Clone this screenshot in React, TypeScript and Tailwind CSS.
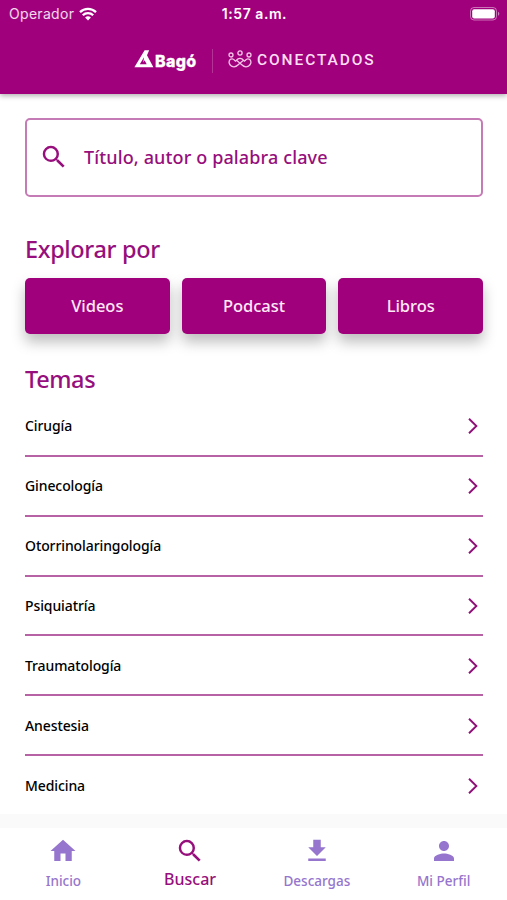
import React from 'react';

const ICON_PATHS = {
  home: 'M10 20v-6h4v6h5v-8h3L12 3 2 12h3v8z',
  search:
    'M15.5 14h-.79l-.28-.27A6.471 6.471 0 0 0 16 9.5 6.5 6.5 0 1 0 9.5 16c1.61 0 3.09-.59 4.23-1.57l.27.28v.79l5 4.99L20.49 19l-4.99-5zm-6 0C7.01 14 5 11.99 5 9.5S7.01 5 9.5 5 14 7.01 14 9.5 11.99 14 9.5 14z',
  download: 'M19 9h-4V3H9v6H5l7 7 7-7zM5 18v2h14v-2H5z',
  person:
    'M12 12c2.21 0 4-1.79 4-4s-1.79-4-4-4-4 1.79-4 4 1.79 4 4 4zm0 2c-2.67 0-8 1.34-8 4v2h16v-2c0-2.66-5.33-4-8-4z',
};

type IconName = keyof typeof ICON_PATHS;

const FILTERS = ['Videos', 'Podcast', 'Libros'];

const TOPICS = [
  'Cirugía',
  'Ginecología',
  'Otorrinolaringología',
  'Psiquiatría',
  'Traumatología',
  'Anestesia',
  'Medicina',
];

const TABS: { label: string; icon: IconName; active?: boolean }[] = [
  { label: 'Inicio', icon: 'home' },
  { label: 'Buscar', icon: 'search', active: true },
  { label: 'Descargas', icon: 'download' },
  { label: 'Mi Perfil', icon: 'person' },
];

function Icon({ name }: { name: IconName }) {
  return (
    <svg viewBox="0 0 24 24" className="size-[30px] shrink-0" fill="currentColor">
      <path d={ICON_PATHS[name]} />
    </svg>
  );
}

function StatusBar() {
  return (
    <div className="grid h-[27px] grid-cols-3 items-center pr-[7px] pl-[9px] font-['Inter','Liberation_Sans',sans-serif] text-[14px] text-white">
      <div className="flex items-center gap-[5px]">
        <span className="tracking-[0.3px] text-white/85">Operador</span>
        <svg viewBox="0 0 18 14" className="h-[14px] w-[18px]" fill="none" stroke="white" strokeWidth="2.3">
          <path d="M1 5.2a11.5 11.5 0 0 1 16 0M3.8 8.2a7.4 7.4 0 0 1 10.4 0" />
          <path d="M9 13.6 6.1 10.6a4.2 4.2 0 0 1 5.8 0z" fill="white" stroke="none" />
        </svg>
      </div>
      <span className="text-center font-semibold tracking-[0.55px] whitespace-nowrap">1:57 a.m.</span>
      <svg viewBox="0 0 30 14" className="h-[14px] w-[30px] justify-self-end">
        <rect x="0.5" y="0.5" width="26" height="12.5" rx="3.5" fill="none" stroke="white" strokeOpacity="0.45" />
        <rect x="2.2" y="2.2" width="22.6" height="9.2" rx="2" fill="white" />
        <path d="M28 4.8v4c1.8-.6 1.8-3.4 0-4z" fill="white" fillOpacity="0.5" />
      </svg>
    </div>
  );
}

function Brand() {
  return (
    <div className="flex h-[67px] items-center pt-px pl-[134px] text-white">
      <svg viewBox="0 0 20 18" className="mb-[4px] h-[18px] w-[20px]" fill="white">
        <path
          fillRule="evenodd"
          d="M10.600.2h4.600L13 5.200 19.400 17.300H.4zM10 7.300 5.800 14.300h6.900l-2.100-4-1.300 2.300z"
        />
      </svg>
      <span className="ml-px w-[43px] font-['Inter','Liberation_Sans',sans-serif] text-[16px] leading-none font-extrabold tracking-[0.3px] [-webkit-text-stroke:0.3px_white]">
        Bagó
      </span>
      <div className="ml-[14px] h-6 w-px bg-white/20" />
      <svg viewBox="0 0 24 18" className="mb-1 ml-[15px] h-[18px] w-6" fill="none" stroke="#f3c4e8" strokeWidth="1.3">
        <circle cx="12" cy="3" r="2.100" />
        <circle cx="3" cy="5" r="2" />
        <circle cx="21" cy="5" r="2" />
        <path d="M2.200 9.300c-2 2.400-1.200 5.200 1.400 6.900 2.400 1.200 4.800.4 6.600-1.400l5.300-4.600c-1.800-2.400-5.200-2.400-7 0l5.300 4.600c1.800 1.800 4.200 2.600 6.600 1.400 2.600-1.700 3.400-4.500 1.400-6.900-1.800-.9-3.400-.3-4.300.9l-1.600 1.400M2.200 9.300c1.800-.9 3.400-.3 4.300.9l1.600 1.400" />
      </svg>
      <span className="ml-[5px] font-['Roboto','Liberation_Sans',sans-serif] text-[15.5px] leading-none font-medium tracking-[1.9px] text-[#fbdff4]">
        CONECTADOS
      </span>
    </div>
  );
}

function TopicRow({ label, last }: { label: string; last: boolean }) {
  return (
    <li
      className={`flex h-[59.85px] items-center justify-between pr-[5px] text-[14px] font-medium text-black ${
        last ? '' : 'border-b-2 border-[#b862a6]'
      }`}
    >
      <span className="tracking-[-0.1px]">{label}</span>
      <svg viewBox="0 0 10 16" className="mt-px h-4 w-[10px]" fill="none" stroke="#8f1178" strokeWidth="1.9">
        <path d="m1 .8 7.400 7.200L1 15.200" />
      </svg>
    </li>
  );
}

export default function App() {
  return (
    <div className="flex h-[900px] w-[507px] flex-col overflow-hidden bg-white font-['Noto_Sans','Open_Sans',sans-serif]">
      <header className="z-10 h-[94px] shrink-0 bg-[#a1007d] shadow-[0_2px_5px_rgba(0,0,0,0.3)]">
        <StatusBar />
        <Brand />
      </header>

      <main className="flex h-[720px] shrink-0 flex-col overflow-hidden pt-6 pr-[24px] pl-[25px] text-[#960f7c]">
        <div className="flex h-[79px] shrink-0 items-center rounded-[5px] border-2 border-[#c57bb6] pb-px pl-[12px]">
          <Icon name="search" />
          <span className="ml-[15px] text-[18px] font-medium tracking-[0.13px]">Título, autor o palabra clave</span>
        </div>

        <h2 className="mt-[35px] text-[23.5px] leading-[34px] font-medium tracking-[-0.35px]">Explorar por</h2>
        <div className="mt-[12px] grid h-14 shrink-0 grid-cols-3 gap-3">
          {FILTERS.map((label) => (
            <button
              key={label}
              className="rounded-[5px] bg-[#a1007d] pt-px text-[16.5px] font-medium tracking-[-0.05px] text-[#fdeaf8] shadow-[0_8px_14px_rgba(0,0,0,0.26)]"
            >
              {label}
            </button>
          ))}
        </div>

        <h2 className="mt-[28px] text-[23.5px] leading-[34px] font-medium tracking-[-0.4px]">Temas</h2>
        <ul className="mt-px flex shrink-0 flex-col">
          {TOPICS.map((topic, idx) => (
            <TopicRow key={topic} label={topic} last={idx === TOPICS.length - 1} />
          ))}
        </ul>
      </main>

      <div className="h-[14px] shrink-0 bg-[#fafafa]" />

      <nav className="grid h-[72px] grid-cols-4 pt-2">
        {TABS.map(({ label, icon, active }) => (
          <div
            key={label}
            className={`flex flex-col items-center font-medium ${active ? 'text-[#960f7c]' : 'text-[#9575cd]'}`}
          >
            <Icon name={icon} />
            <span className={active ? 'text-[16px] leading-[26px]' : 'text-[13.5px] leading-[30px]'}>{label}</span>
          </div>
        ))}
      </nav>
    </div>
  );
}
